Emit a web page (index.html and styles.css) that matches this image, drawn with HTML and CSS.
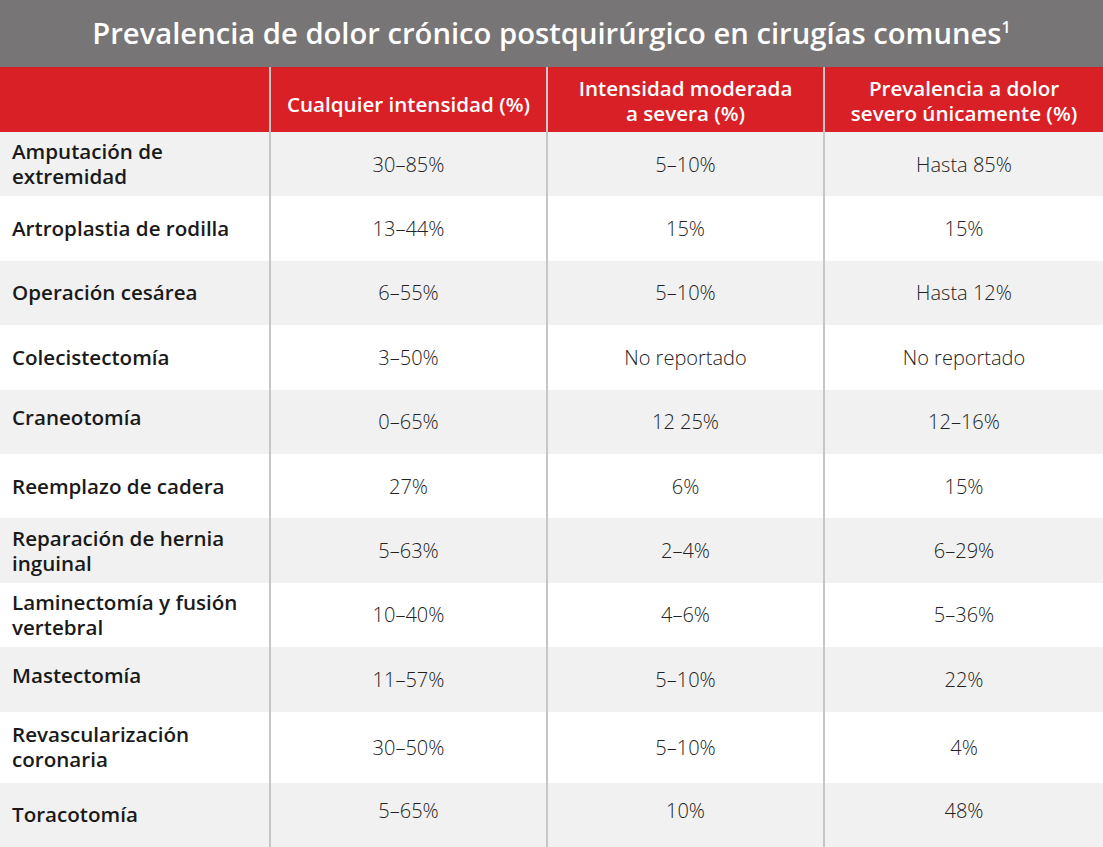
FILE: index.html
```html
<!DOCTYPE html>
<html lang="es">
<head>
<meta charset="utf-8">
<title>Prevalencia de dolor crónico postquirúrgico</title>
<link rel="stylesheet" href="styles.css">
</head>
<body>
<div class="sheet">
  <h1 class="title">Prevalencia de dolor crónico postquirúrgico en cirugías comunes<sup>1</sup></h1>
  <table class="grid">
    <colgroup>
      <col class="c1"><col class="c2"><col class="c3"><col class="c4">
    </colgroup>
    <thead>
      <tr class="head">
        <th></th>
        <th class="low">Cualquier intensidad (%)</th>
        <th>Intensidad moderada<br>a severa (%)</th>
        <th>Prevalencia a dolor<br>severo únicamente (%)</th>
      </tr>
    </thead>
    <tbody>
      <tr class="odd"><td class="name">Amputación de<br>extremidad</td><td>30–85%</td><td>5–10%</td><td>Hasta 85%</td></tr>
      <tr class="even"><td class="name">Artroplastia de rodilla</td><td>13–44%</td><td>15%</td><td>15%</td></tr>
      <tr class="odd"><td class="name">Operación cesárea</td><td>6–55%</td><td>5–10%</td><td>Hasta 12%</td></tr>
      <tr class="even"><td class="name">Colecistectomía</td><td>3–50%</td><td>No reportado</td><td>No reportado</td></tr>
      <tr class="odd"><td class="name up">Craneotomía</td><td>0–65%</td><td>12 25%</td><td>12–16%</td></tr>
      <tr class="even"><td class="name">Reemplazo de cadera</td><td>27%</td><td>6%</td><td>15%</td></tr>
      <tr class="odd"><td class="name">Reparación de hernia<br>inguinal</td><td>5–63%</td><td>2–4%</td><td>6–29%</td></tr>
      <tr class="even"><td class="name">Laminectomía y fusión<br>vertebral</td><td>10–40%</td><td>4–6%</td><td>5–36%</td></tr>
      <tr class="odd"><td class="name up">Mastectomía</td><td>11–57%</td><td>5–10%</td><td>22%</td></tr>
      <tr class="even tall"><td class="name">Revascularización<br>coronaria</td><td>30–50%</td><td>5–10%</td><td>4%</td></tr>
      <tr class="odd"><td class="name">Toracotomía</td><td class="up">5–65%</td><td class="up">10%</td><td class="up">48%</td></tr>
    </tbody>
  </table>
</div>
</body>
</html>
```
FILE: styles.css
```css
html, body {
  margin: 0;
  padding: 0;
  background: #ffffff;
}

body {
  font-family: "Open Sans", "Noto Sans", "Liberation Sans", sans-serif;
  width: 1103px;
  height: 847px;
  overflow: hidden;
}

.sheet {
  width: 1103px;
}

.title {
  margin: 0;
  height: 67px;
  background: #777575;
  color: #ffffff;
  font-size: 29.2px;
  font-weight: 600;
  line-height: 67px;
  text-align: center;
}

.title sup {
  font-size: 16px;
  line-height: 0;
  vertical-align: 11px;
  font-weight: 600;
}

.grid {
  width: 1103px;
  border-collapse: collapse;
  table-layout: fixed;
}

.c1 { width: 270px; }
.c2 { width: 277px; }
.c3 { width: 277px; }
.c4 { width: 279px; }

.grid th,
.grid td {
  padding: 0;
  text-align: center;
  vertical-align: middle;
}

.grid th + th,
.grid td + td {
  border-left: 2px solid #c6c6c6;
}

.head {
  height: 65px;
  background: #d92026;
}

.head th {
  color: #ffffff;
  font-size: 20.6px;
  font-weight: 600;
  line-height: 25px;
  padding-top: 2px;
}

.head th.low {
  padding-top: 9px;
}

tbody tr {
  height: 64.4px;
}

tbody tr.tall {
  height: 71px;
}

tr.odd { background: #f1f1f1; }
tr.even { background: #ffffff; }

.grid td {
  color: #222222;
  font-size: 20px;
  font-weight: 300;
  line-height: 25px;
}

.grid td.name {
  text-align: left;
  padding-left: 12px;
  color: #1a1a1a;
  font-size: 20.6px;
  font-weight: 600;
}

.grid td.up {
  padding-bottom: 8px;
}
```
